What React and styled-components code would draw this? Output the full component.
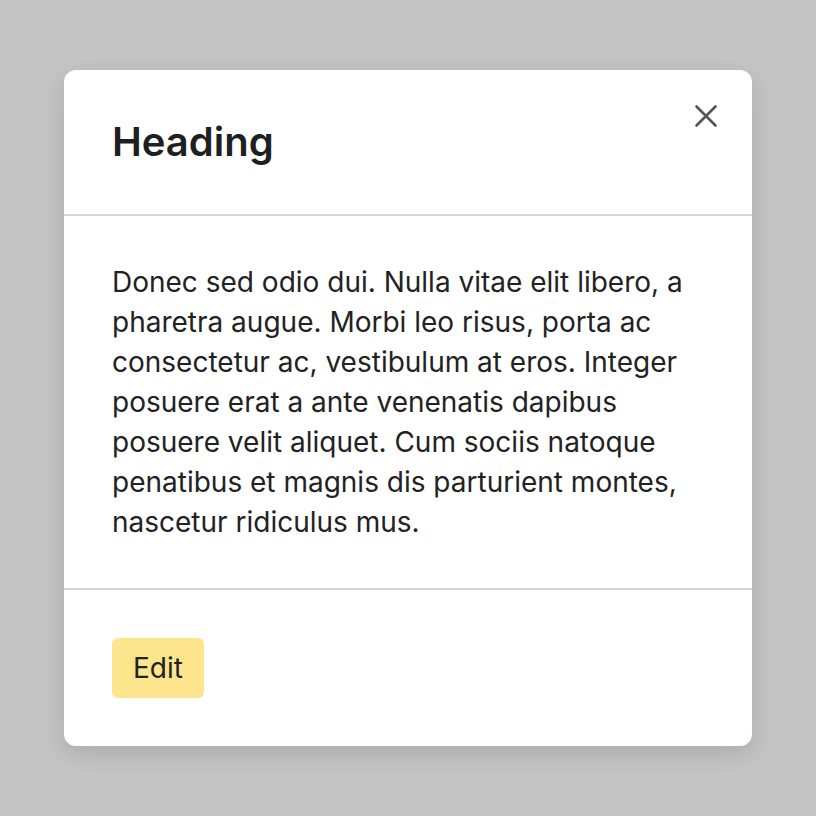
import React from "react";
import styled, { createGlobalStyle } from "styled-components";

const GlobalStyle = createGlobalStyle`
  html, body {
    margin: 0;
    padding: 0;
    background: #c4c4c4;
  }
  body {
    font-family: Inter, "Noto Sans", sans-serif;
    color: #222;
  }
`;

const Page = styled.div`
  min-height: 816px;
  display: flex;
  align-items: center;
  justify-content: center;
`;

const Card = styled.section`
  position: relative;
  width: 688px;
  background: #fff;
  border-radius: 12px;
  box-shadow: 0 8px 24px rgba(0, 0, 0, 0.12);
  overflow: hidden;
`;

const Section = styled.div`
  padding: ${(p) => p.$pad || "48px"} 48px;
  border-top: ${(p) => (p.$divided ? "2px solid #d6d6d6" : "none")};
`;

const Heading = styled.h2`
  margin: 0;
  font-size: 40px;
  line-height: 48px;
  font-weight: 600;
  color: #1f1f1f;
`;

const Body = styled.p`
  margin: 0;
  font-size: 28px;
  line-height: 40px;
  color: #222;
`;

const CloseButton = styled.button`
  position: absolute;
  top: 34px;
  right: 34px;
  width: 24px;
  height: 24px;
  padding: 0;
  border: none;
  background: none;
  display: flex;
  align-items: center;
  justify-content: center;
  cursor: pointer;
  color: #555;
`;

const EditButton = styled.button`
  font-family: inherit;
  font-size: 28px;
  line-height: 36px;
  padding: 12px 21px;
  border: none;
  border-radius: 6px;
  background: #fde58e;
  color: #222;
  cursor: pointer;
`;

export default function App() {
  return (
    <>
      <GlobalStyle />
      <Page>
        <Card>
          <CloseButton aria-label="Close">
            <svg width="24" height="24" viewBox="0 0 24 24" fill="none">
              <path
                d="M2.5 2.5 L21.5 21.5 M21.5 2.5 L2.5 21.5"
                stroke="currentColor"
                strokeWidth="2.6"
                strokeLinecap="round"
              />
            </svg>
          </CloseButton>
          <Section>
            <Heading>Heading</Heading>
          </Section>
          <Section $divided $pad="46px">
            <Body>
              Donec sed odio dui. Nulla vitae elit libero, a pharetra augue.
              Morbi leo risus, porta ac consectetur ac, vestibulum at eros.
              Integer posuere erat a ante venenatis dapibus posuere velit
              aliquet. Cum sociis natoque penatibus et magnis dis parturient
              montes, nascetur ridiculus mus.
            </Body>
          </Section>
          <Section $divided>
            <EditButton>Edit</EditButton>
          </Section>
        </Card>
      </Page>
    </>
  );
}
